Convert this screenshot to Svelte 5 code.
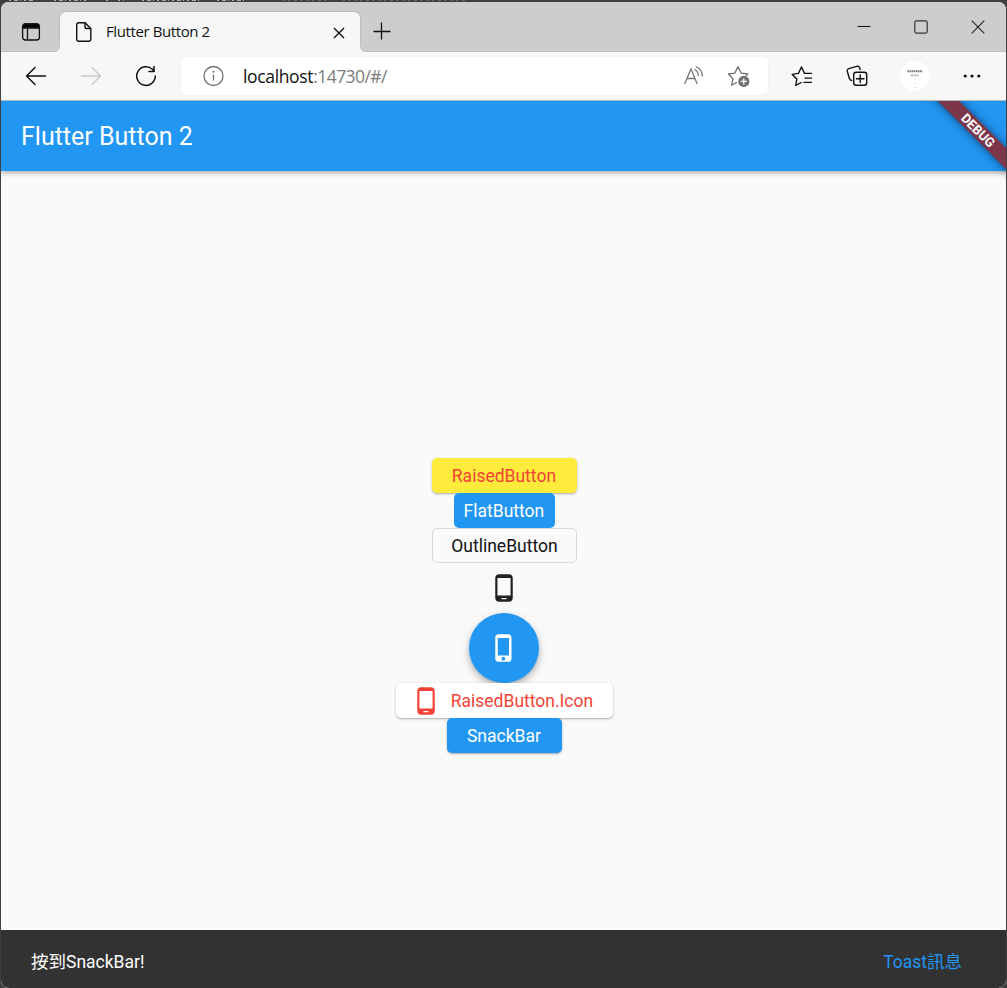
<script>
  const phone =
    'M16 1H8C6.34 1 5 2.34 5 4v16c0 1.66 1.34 3 3 3h8c1.66 0 3-1.34 3-3V4c0-1.66-1.34-3-3-3zm-2 20h-4v-1h4v1zm3.25-3H6.75V4h10.5v14z';
  const iphone =
    'M15.5 1h-8C6.12 1 5 2.12 5 3.5v17C5 21.88 6.12 23 7.5 23h8c1.38 0 2.5-1.12 2.5-2.5v-17C18 2.12 16.88 1 15.5 1zm-4 21c-.83 0-1.5-.67-1.5-1.5s.67-1.5 1.5-1.5 1.5.67 1.5 1.5-.67 1.5-1.5 1.5zm4.5-4H7V4h9v14z';
</script>

<div class="desktop">
  <svg class="behind" width="480" height="2" viewBox="0 0 480 2" fill="none">
    <path d="M9 .5h26M54 .5h32M106 .5h4M118 .5h6M142 .5h58M217 .5h29" stroke="#aaa" stroke-dasharray="2 3 4 2 1 3" />
    <path d="M282 .5h44M342 .5h126" stroke="#6c6560" stroke-dasharray="3 3 2 4" />
  </svg>
  <div class="window">
    <header class="titlebar">
      <div class="tabmenu">
        <svg width="20" height="20" viewBox="0 0 20 20" fill="none" stroke="#111" stroke-width="1.3">
          <rect x="1.6" y="2" width="16.8" height="16" rx="2.8" />
          <path d="M2 3.8Q2.4 2 4.4 2h11.2q2 0 2.4 1.8V6H2z" fill="#000" />
          <path d="M6.5 6v12" />
        </svg>
      </div>
      <div class="tab">
        <svg width="18" height="22" viewBox="0 0 18 22" fill="none" stroke="#111" stroke-width="1.4" stroke-linejoin="round">
          <path d="M4 1.7h6l5.8 5.8V18q0 2.3-2.3 2.3H4Q1.7 20.300 1.700 18V4Q1.700 1.700 4 1.700z" />
          <path d="M10 1.700V6q0 1.500 1.500 1.500h4.300" />
        </svg>
        <span class="tabtitle">Flutter Button 2</span>
        <svg class="tabclose" width="12" height="12" viewBox="0 0 12 12" stroke="#111" stroke-width="1.4">
          <path d="M1 1l10 10M11 1L1 11" />
        </svg>
      </div>
      <div class="strip">
        <svg class="newtab" width="18" height="18" viewBox="0 0 18 18" stroke="#111" stroke-width="1.3">
          <path d="M.5 9.500h17M8.500 .5v17" />
        </svg>
        <div class="controls">
          <svg width="14" height="14" viewBox="0 0 14 14" stroke="#111"><path d="M.5 6.500h13" /></svg>
          <svg width="14" height="14" viewBox="0 0 14 14" fill="none" stroke="#333" stroke-width="1.200"><rect x=".8" y=".8" width="12.400" height="12.400" rx="1.800" /></svg>
          <svg width="14" height="14" viewBox="0 0 14 14" stroke="#222" stroke-width="1.100"><path d="M.7.7l12.600 12.600M13.300.7L.7 13.300" /></svg>
        </div>
      </div>
    </header>

    <nav class="toolbar">
      <svg class="back" width="22" height="20" viewBox="0 0 22 20" fill="none" stroke="#111" stroke-width="1.400" stroke-linecap="round" stroke-linejoin="round">
        <path d="M10 1.500L1.500 10l8.500 8.500M1.500 10h19" />
      </svg>
      <svg class="forward" width="22" height="20" viewBox="0 0 22 20" fill="none" stroke="#c9c9c9" stroke-width="1.400" stroke-linecap="round" stroke-linejoin="round">
        <path d="M12 1.500l8.500 8.500-8.500 8.500M20.500 10h-19" />
      </svg>
      <svg class="reload" width="22" height="22" viewBox="0 0 22 22" fill="none" stroke="#111" stroke-width="1.500" stroke-linecap="round" stroke-linejoin="round">
        <path d="M20.300 11a9.300 9.300 0 1 1-2.900-6.700l1.600 1.900" />
        <path d="M19 1.500v5h-5" />
      </svg>
      <div class="address">
        <svg class="info" width="22" height="22" viewBox="0 0 22 22" fill="none" stroke="#707070" stroke-width="1.300">
          <circle cx="11.500" cy="11" r="9.500" />
          <path d="M11.500 9.600v6" />
          <circle cx="11.500" cy="6.700" r="1" fill="#707070" stroke="none" />
        </svg>
        <span class="url"><b>localhost</b>:14730/#/</span>
        <svg class="read" width="22" height="20" viewBox="0 0 22 20" fill="none" stroke="#777" stroke-width="1.300" stroke-linecap="round">
          <path d="M1.800 17.500L8 3 14 17.500M4 12.500h8" />
          <path d="M12 3.500q3.200 1.800 3.200 6M13.500 1q5.800 2.500 5.800 9" />
        </svg>
        <svg class="fav" width="24" height="24" viewBox="0 0 24 24" fill="none" stroke="#707070" stroke-width="1.300" stroke-linejoin="round">
          <path d="M10 18.200l-5.300 3 1.200-6.500L1.500 10l6.300-.9L11 2.800l3.200 6.300 6.600.9-2 2" />
          <circle cx="16.800" cy="17.400" r="5.600" fill="#707070" stroke="none" />
          <path d="M16.800 14.400v6M13.800 17.400h6" stroke="#fff" stroke-width="1.400" />
        </svg>
      </div>
      <svg class="favlist" width="22" height="22" viewBox="0 0 22 22" fill="none" stroke="#111" stroke-width="1.400" stroke-linecap="round" stroke-linejoin="round">
        <path d="M10.200 17.500l-5.400 2.900 1-6.300L1.200 9.400l6.200-1L10.500 2l3 6.400h7M14 13.100h6.500M13 17.400h7.500" />
      </svg>
      <svg class="coll" width="22" height="22" viewBox="0 0 22 22" fill="none" stroke="#111" stroke-width="1.400" stroke-linecap="round" stroke-linejoin="round">
        <path d="M5.700 15.500Q4 15.400 3.500 13.800L1.300 6.500Q.8 4.300 2.800 3.600L10.800 1.300Q13 .8 13.700 2.800L14.200 4.600" />
        <rect x="7.700" y="7.300" width="13" height="13" rx="2.500" />
        <path d="M14.200 10v7.600M10.400 13.800h7.600" />
      </svg>
      <svg class="avatar" width="30" height="30" viewBox="0 0 30 30">
        <circle cx="15" cy="15" r="15" fill="#fff" />
        <path d="M7.500 10.300h15" stroke="#777" stroke-width="2" stroke-dasharray="1.600 .5" />
        <path d="M11 14.300h8" stroke="#aaa" stroke-width="1.700" stroke-dasharray="2 .7" />
        <path d="M15.500 18v10" stroke="#ccc" stroke-dasharray="1 3" />
      </svg>
      <svg class="more" width="18" height="6" viewBox="0 0 18 6" fill="#111">
        <circle cx="2.200" cy="3" r="1.600" /><circle cx="9" cy="3" r="1.600" /><circle cx="15.800" cy="3" r="1.600" />
      </svg>
    </nav>

    <section class="app">
      <div class="appbar"><h1>Flutter Button 2</h1></div>
      <div class="banner"><div class="ribbon">DEBUG</div></div>
      <main>
        <button class="raised yellow">RaisedButton</button>
        <button class="flat">FlatButton</button>
        <button class="outline">OutlineButton</button>
        <button class="iconbtn" aria-label="Phone"><svg width="30" height="30" viewBox="0 0 24 24" fill="#212121"><path d={phone} /></svg></button>
        <button class="fab" aria-label="Call"><svg width="30" height="30" viewBox="0 0 24 24" fill="#fff"><path d={iphone} /></svg></button>
        <button class="raised white">
          <svg width="30" height="30" viewBox="0 0 24 24" fill="#f44336"><path d={phone} /></svg>
          <span>RaisedButton.Icon</span>
        </button>
        <button class="raised blue">SnackBar</button>
      </main>
      <footer class="snack">
        <span>按到SnackBar!</span>
        <span class="action">Toast訊息</span>
      </footer>
    </section>
  </div>
</div>

<style>
  :global(body) { margin: 0; }
  .desktop {
    position: relative; box-sizing: border-box; width: 1007px; height: 988px;
    padding: 2px 1px 0; background: #3f3f40; overflow: hidden;
  }
  .behind { position: absolute; left: 0; top: 0; }
  .window {
    position: relative; height: 986px; display: flex; flex-direction: column; overflow: hidden;
    border-radius: 8px; background: #f7f7f7;
  }
  svg { display: block; flex: none; }
  .titlebar { height: 50px; flex: none; display: flex; background: linear-gradient(#cdcdcd 25px, #f7f7f7 25px); }
  .tabmenu {
    width: 59px; box-sizing: border-box; padding: 20px 0 0 20px; background: #cdcdcd;
    border-bottom: 1px solid #bfbfbf; border-bottom-right-radius: 6px;
  }
  .strip {
    flex: 1; display: flex; box-sizing: border-box; background: #cdcdcd;
    border-bottom: 1px solid #bfbfbf; border-bottom-left-radius: 6px;
  }
  .tab {
    position: relative; width: 300px; height: 40px; margin-top: 10px; box-sizing: border-box;
    display: flex; align-items: center; padding: 0 15px 0 15px; background: #f7f7f7;
    border-radius: 6px 6px 0 0; box-shadow: 0 0 2px #999;
    clip-path: inset(-3px -3px 6px -3px);
  }
  .tabtitle {
    flex: 1; margin: -2px 0 0 13px; font: 15px/20px "Open Sans", sans-serif;
    letter-spacing: -0.400px; color: #111; white-space: nowrap;
  }
  .tabclose { margin-top: 1px; }
  .newtab { margin: 20px 0 0 13px; }
  .controls { display: flex; gap: 43px; margin: 18px 21px 0 auto; }
  .toolbar { height: 49px; flex: none; box-sizing: border-box; display: flex; align-items: center; border-bottom: 1px solid #b5b5b5; }
  .back { margin-left: 24px; }
  .forward { margin-left: 33px; }
  .reload { margin-left: 33px; }
  .address {
    width: 587px; height: 38px; margin-left: 24px; box-sizing: border-box; display: flex; align-items: center;
    padding: 0 17px 0 21px; background: #fff; border-radius: 5px; box-shadow: 0 0 2px #e5e5e5;
  }
  .url { flex: 1; margin: -1px 0 0 19px; font: 400 17.5px/24px "Open Sans", sans-serif; letter-spacing: -0.550px; color: #7b7b7b; }
  .url b { font-weight: 400; color: #111; letter-spacing: -0.350px; }
  .read { margin-right: 1px; }
  .fav { margin-left: 21px; }
  .favlist { margin-left: 23px; }
  .coll { margin-left: 33px; }
  .avatar { margin-left: 32px; }
  .more { margin-left: 33px; }
  .app {
    position: relative; flex: 1; display: flex; flex-direction: column; overflow: hidden;
    background: #fafafa; font-family: Roboto, "Noto Sans CJK TC", sans-serif;
  }
  .appbar {
    height: 70px; flex: none; box-sizing: border-box; display: flex; align-items: center; padding: 2px 0 0 20px;
    background: #2196f3; box-shadow: 0 2px 5px rgba(0, 0, 0, .32);
  }
  h1 { margin: 0; font-size: 25px; line-height: 30px; font-weight: 400; color: #fff; }
  .banner { position: absolute; top: 0; right: 0; width: 90px; height: 90px; overflow: hidden; }
  .ribbon {
    position: absolute; left: 2px; top: 22px; width: 120px; height: 15px; transform: rotate(45deg);
    background: #7d3549; box-shadow: 0 0 10px rgba(0, 0, 0, .55);
    color: #fff; text-align: center; font-size: 13px; line-height: 15px; font-weight: 700;
  }
  main { flex: 1; display: flex; flex-direction: column; align-items: center; padding-top: 287px; padding-left: 1.900px; }
  button {
    box-sizing: border-box; height: 35px; flex: none; border: 0; border-radius: 5px; padding: 0;
    display: flex; align-items: center; justify-content: center;
    font: 400 17.5px/20px Roboto, sans-serif; color: #fff; background: none;
  }
  .raised { box-shadow: 0 1px 3px rgba(0, 0, 0, .22), 0 1px 1px rgba(0, 0, 0, .12); }
  .yellow { width: 145.500px; padding-right: 1px; background: #ffeb3b; color: #f44336; }
  .flat { width: 101px; padding-right: 1px; background: #2196f3; }
  .outline { width: 145.500px; border: 1.250px solid #d8d8d8; color: #111; }
  .iconbtn { width: 60px; height: 50px; }
  .fab { width: 70px; height: 70px; border-radius: 50%; background: #2196f3; box-shadow: 0 4px 10px rgba(0, 0, 0, .22), 0 2px 4px rgba(0, 0, 0, .14); }
  .white { position: relative; width: 217.500px; gap: 10px; padding-right: 5px; background: #fff; color: #f44336; }
  .blue { position: relative; width: 115px; padding-right: 1px; background: #2196f3; }
  .snack {
    height: 58px; flex: none; box-sizing: border-box; display: flex; justify-content: space-between;
    padding: 19px 44px 0 30px; background: #323232; color: #fff; font-size: 17.500px; line-height: 26px;
  }
  .action { color: #2196f3; }
</style>
